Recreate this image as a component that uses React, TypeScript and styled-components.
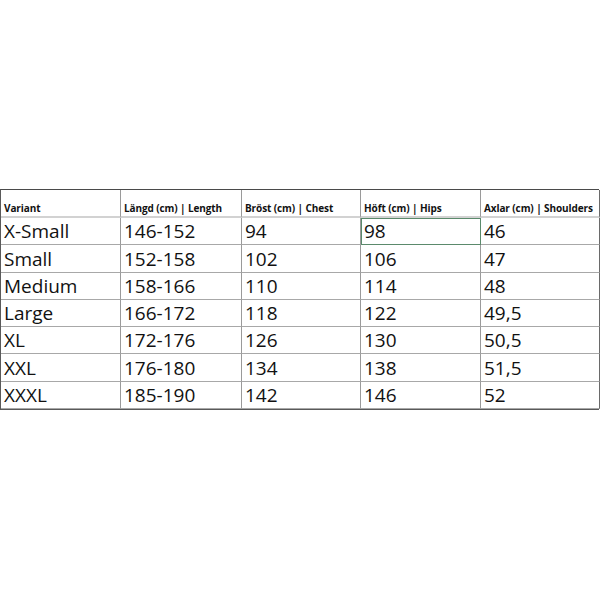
import React from "react";
import styled, { createGlobalStyle } from "styled-components";

const GlobalStyle = createGlobalStyle`
  html, body {
    margin: 0;
    padding: 0;
    background: #ffffff;
  }
  body {
    width: 600px;
    height: 600px;
    overflow: hidden;
  }
`

const Page = styled.div`
  width: 600px;
  height: 600px;
  padding-top: 189px;
  box-sizing: border-box;
  background: #ffffff;
`

const Sheet = styled.div`
  display: grid;
  grid-template-columns: 120px 121px 119px 120px 119px;
  grid-template-rows: 28px repeat(7, 27.3px);
  width: 599px;
  border-top: 1px solid #4a4a4a;
  border-left: 1px solid #5a5a5a;
  border-bottom: 1px solid #5a5a5a;
  box-sizing: border-box;
`

const Cell = styled.div<{ $head?: boolean; $last?: boolean; $selected?: boolean }>`
  position: relative;
  display: flex;
  align-items: flex-end;
  padding: 0 0 ${(p) => (p.$head ? "3px" : "3px")} 3px;
  box-sizing: border-box;
  overflow: hidden;
  white-space: nowrap;
  font-family: "Open Sans", "Liberation Sans", sans-serif;
  font-size: ${(p) => (p.$head ? "10px" : "19px")};
  font-weight: ${(p) => (p.$head ? 700 : 400)};
  line-height: 1;
  letter-spacing: ${(p) => (p.$head ? "-0.1px" : "0")};
  color: #111111;
  border-right: 1px solid ${(p) => (p.$last ? "#6a6a6a" : "#9a9a9a")};
  border-bottom: ${(p) => (p.$head ? "2px solid #d2d2d2" : "1px solid #a8a8a8")};
  ${(p) => p.$selected && `outline: 1px solid #5b8a6c; outline-offset: -1px;`}
`

const headers = [
  "Variant",
  "Längd (cm) | Length",
  "Bröst (cm) | Chest",
  "Höft (cm) | Hips",
  "Axlar (cm) | Shoulders",
];

const rows = [
  ["X-Small", "146-152", "94", "98", "46"],
  ["Small", "152-158", "102", "106", "47"],
  ["Medium", "158-166", "110", "114", "48"],
  ["Large", "166-172", "118", "122", "49,5"],
  ["XL", "172-176", "126", "130", "50,5"],
  ["XXL", "176-180", "134", "138", "51,5"],
  ["XXXL", "185-190", "142", "146", "52"],
];

const App: React.FC = () => {
  return (
    <>
      <GlobalStyle />
      <Page>
        <Sheet>
          {headers.map((h, i) => (
            <Cell key={h} $head $last={i === headers.length - 1}>
              {h}
            </Cell>
          ))}
          {rows.map((row, r) =>
            row.map((v, c) => (
              <Cell
                key={`${r}-${c}`}
                $last={c === row.length - 1}
                $selected={r === 0 && c === 3}
              >
                {v}
              </Cell>
            ))
          )}
        </Sheet>
      </Page>
    </>
  );
};

export default App;
